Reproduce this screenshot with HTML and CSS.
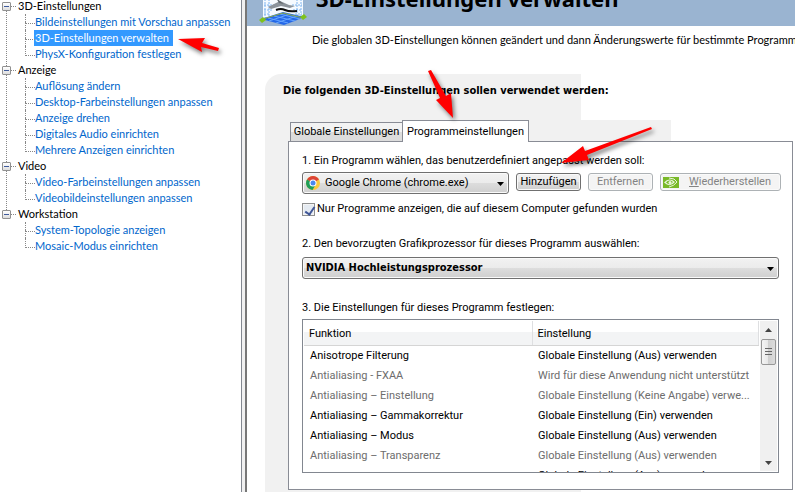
FILE: index.html
```html
<!DOCTYPE html>
<html lang="de">
<head>
    <meta charset="utf-8">
    <title>NVIDIA Systemsteuerung</title>
    <link rel="stylesheet" href="styles.css">
</head>
<body>

<nav class="sidebar">
    <ul class="tree">
        <li class="group">
            <button class="toggle" aria-label="3D-Einstellungen einklappen"></button><span class="group-name">3D-Einstellungen</span>
            <ul class="items">
                <li><a href="#">Bildeinstellungen mit Vorschau anpassen</a></li>
                <li><a href="#" class="selected">3D-Einstellungen verwalten</a></li>
                <li><a href="#">PhysX-Konfiguration festlegen</a></li>
            </ul>
        </li>
        <li class="group">
            <button class="toggle" aria-label="Anzeige einklappen"></button><span class="group-name">Anzeige</span>
            <ul class="items">
                <li><a href="#">Auflösung ändern</a></li>
                <li><a href="#">Desktop-Farbeinstellungen anpassen</a></li>
                <li><a href="#">Anzeige drehen</a></li>
                <li><a href="#">Digitales Audio einrichten</a></li>
                <li><a href="#">Mehrere Anzeigen einrichten</a></li>
            </ul>
        </li>
        <li class="group">
            <button class="toggle" aria-label="Video einklappen"></button><span class="group-name">Video</span>
            <ul class="items">
                <li><a href="#">Video-Farbeinstellungen anpassen</a></li>
                <li><a href="#">Videobildeinstellungen anpassen</a></li>
            </ul>
        </li>
        <li class="group">
            <button class="toggle" aria-label="Workstation einklappen"></button><span class="group-name">Workstation</span>
            <ul class="items">
                <li><a href="#">System-Topologie anzeigen</a></li>
                <li><a href="#">Mosaic-Modus einrichten</a></li>
            </ul>
        </li>
    </ul>
</nav>

<div class="splitter"></div>

<main class="content">
    <header class="banner">
        <svg class="banner-icon" width="48" height="48" viewBox="0 0 48 48">
            <path d="M4 0H44V40L24 46L4 41Z" fill="#f6faff"/>
            <path d="M6 0V40M10 0V38M38 0V38M42 0V40M5 27H15M33 27H43M5 32H14M34 32H43M5 36H11M36 36H43" stroke="#7fb4ee" stroke-dasharray="2 1" fill="none"/>
            <path d="M2 41L24 34L46 39L25 47Z" fill="#2468e8"/>
            <path d="M9 40L29 45M15 38L36 43M21 36L41 41M10 43L31 36M17 45L38 38" stroke="#65a5ff" stroke-width="1"/>
            <path d="M9 29L21 23L30 27L36 28L31 30L22 28L12 31Z" fill="#8c939b"/>
            <path d="M20 25L17 20L25 26Z" fill="#62696f"/>
            <path d="M17 32Q22 30 26 32T38 33" stroke="#111" stroke-width="2" fill="none"/>
            <path d="M4 41L24 35L44 40" stroke="#8fac45" fill="none"/>
            <path d="M0 42L4 39L7 42L3 45Z" fill="#7fc21c"/>
            <path d="M41 39L45 36L48 39L44 42Z" fill="#7fc21c"/>
        </svg>
        <h1>3D-Einstellungen verwalten</h1>
    </header>

    <p class="intro">Die globalen 3D-Einstellungen können geändert und dann Änderungswerte für bestimmte Programme erstellt werden.</p>

    <section class="settings">
        <h2>Die folgenden 3D-Einstellungen sollen verwendet werden:</h2>

        <div class="tabs">
            <button class="tab">Globale Einstellungen</button>
            <button class="tab active">Programmeinstellungen</button>
        </div>

        <div class="panel">
            <label class="step" for="program">1. Ein Programm wählen, das benutzerdefiniert angepasst werden soll:</label>
            <div class="program-row">
                <div class="dropdown program">
                    <select id="program"><option>Google Chrome (chrome.exe)</option></select>
                    <svg class="chrome" width="14" height="14" viewBox="0 0 14 14">
                        <circle cx="7" cy="7" r="7" fill="#fbc93d"/>
                        <path d="M7 7L1 3.5A7 7 0 0 1 13 3.5Z" fill="#dc4437"/>
                        <path d="M7 7L1 3.5A7 7 0 0 0 6.500 14L9.500 9Z" fill="#1f9d58"/>
                        <circle cx="7" cy="7" r="3.500" fill="#fff"/>
                        <circle cx="7" cy="7" r="2.500" fill="#4a87ee"/>
                    </svg>
                    <svg class="caret" width="7" height="4" viewBox="0 0 7 4"><path d="M0 0H7L3.500 4Z"/></svg>
                </div>
                <button class="btn">Hinzufügen</button>
                <button class="btn" disabled>Entfernen</button>
                <button class="btn restore" disabled>
                    <svg width="16" height="11" viewBox="0 0 16 11">
                        <path d="M0 0H16V11H0Z" fill="#79b928"/>
                        <path d="M1 5.500Q6 0 12 5Q7 11 1 5.500ZM3 5.500Q7 9 10 5Q6 2 3 5.500" fill="#e9f5dc" fill-rule="evenodd"/>
                        <circle cx="7" cy="5.500" r="1.500" fill="#e9f5dc"/>
                        <path d="M6 1Q12 1 14 5Q11 9 6 10" stroke="#e9f5dc" fill="none"/>
                    </svg>
                    <span><u>W</u>iederherstellen</span>
                </button>
            </div>

            <div class="check">
                <input type="checkbox" id="only-found" checked>
                <label for="only-found">Nur Programme anzeigen, die auf diesem Computer gefunden wurden</label>
            </div>

            <label class="step" for="gpu">2. Den bevorzugten Grafikprozessor für dieses Programm auswählen:</label>
            <div class="dropdown gpu">
                <select id="gpu"><option>NVIDIA Hochleistungsprozessor</option></select>
                <svg class="caret" width="7" height="4" viewBox="0 0 7 4"><path d="M0 0H7L3.500 4Z"/></svg>
            </div>

            <p class="step" id="features-label">3. Die Einstellungen für dieses Programm festlegen:</p>
            <div class="list">
                <table class="features" aria-labelledby="features-label">
                    <thead>
                        <tr><th>Funktion</th><th>Einstellung</th></tr>
                    </thead>
                    <tbody>
                        <tr><td>Anisotrope Filterung</td><td>Globale Einstellung (Aus) verwenden</td></tr>
                        <tr class="off"><td>Antialiasing - FXAA</td><td>Wird für diese Anwendung nicht unterstützt</td></tr>
                        <tr class="off"><td>Antialiasing – Einstellung</td><td>Globale Einstellung (Keine Angabe) verwe...</td></tr>
                        <tr><td>Antialiasing – Gammakorrektur</td><td>Globale Einstellung (Ein) verwenden</td></tr>
                        <tr><td>Antialiasing – Modus</td><td>Globale Einstellung (Aus) verwenden</td></tr>
                        <tr class="off"><td>Antialiasing – Transparenz</td><td>Globale Einstellung (Aus) verwenden</td></tr>
                        <tr><td></td><td>Globale Einstellung (Aus) verwenden</td></tr>
                    </tbody>
                </table>
                <div class="scrollbar">
                    <svg width="7" height="4" viewBox="0 0 7 4"><path d="M0 4H7L3.500 0Z"/></svg>
                    <div class="thumb"></div>
                    <svg class="down" width="7" height="4" viewBox="0 0 7 4"><path d="M0 0H7L3.500 4Z"/></svg>
                </div>
            </div>
        </div>
    </section>
</main>

<!-- hint arrows, drawn over the window -->
<svg class="arrows" width="795" height="492" viewBox="0 0 795 492">
    <path d="M178 39L205 38L202 43L219 48L218 51L201 47L202 52Z"/>
    <path d="M428 71L431 70L446 96L451 93L453 118L436 100L440 98Z"/>
    <path d="M561 163L583 146L585 151L651 127L652 129L587 155L589 160Z"/>
</svg>

</body>
</html>
```
FILE: styles.css
```css
* {
    box-sizing: border-box;
}
body {
    margin: 0;
    height: 100vh;
    display: flex;
    overflow: hidden;
    background: #fff;
    color: #000;
    font-family: Roboto, "Noto Sans", sans-serif;
    font-size: 11px;
    line-height: 16px;
}
button, select, input {
    font: inherit;
    color: inherit;
    margin: 0;
}
h1, h2, p, ul {
    margin: 0;
    padding: 0;
}

/* navigation tree */
.sidebar {
    width: 241px;
    flex: none;
    overflow: hidden;
    font-family: Lato, Roboto, sans-serif;
}
.tree, .items {
    list-style: none;
}
.tree {
    margin-top: -2px;
}
.group {
    position: relative;
    white-space: nowrap;
}
.group:not(:last-child)::before {
    content: "";
    position: absolute;
    left: 6px;
    top: 8px;
    bottom: -8px;
    border-left: 1px dotted #888;
}
.group::after {
    content: "";
    position: absolute;
    left: 11px;
    top: 8px;
    width: 5px;
    border-top: 1px dotted #888;
}
.toggle {
    position: absolute;
    left: 2px;
    top: 4px;
    width: 9px;
    height: 9px;
    padding: 0;
    border: 1px solid #919191;
    border-radius: 1px;
    background: linear-gradient(#3f5b9c, #3f5b9c) center / 5px 1px no-repeat, linear-gradient(#fff, #ddd);
    z-index: 1;
}
.group-name {
    display: block;
    padding-left: 18px;
}
.items {
    padding-left: 25px;
}
.items li {
    position: relative;
    height: 16px;
    padding-left: 9px;
}
.items li::before {
    content: "";
    position: absolute;
    left: 0;
    top: 0;
    width: 9px;
    height: 9px;
    border-left: 1px dotted #888;
    border-bottom: 1px dotted #888;
}
.items li:not(:last-child)::after {
    content: "";
    position: absolute;
    left: 0;
    top: 8px;
    bottom: 0;
    border-left: 1px dotted #888;
}
.items a {
    display: inline-block;
    height: 16px;
    line-height: 15px;
    padding: 0 1px;
    color: #0066cc;
    text-decoration: none;
}
.items a.selected {
    padding-right: 4px;
    background: #3399ff;
    color: #fff;
}

.splitter {
    width: 6px;
    flex: none;
    background: #f0f0f0;
    border-left: 1px solid #828790;
    border-right: 2px solid #777;
}

/* right side */
.content {
    flex: 1;
    min-width: 0;
}
.banner {
    height: 26px;
    display: flex;
    align-items: flex-end;
    gap: 9px;
    padding-left: 12px;
    background: #9ab4d1;
    overflow: hidden;
}
.banner-icon {
    flex: none;
}
.banner h1 {
    padding-bottom: 12px;
    font-family: "Noto Sans", sans-serif;
    font-size: 22px;
    line-height: 32px;
    white-space: nowrap;
}
.intro {
    padding: 6px 0 0 65px;
    height: 48px;
    font-family: Lato, Roboto, sans-serif;
    white-space: nowrap;
    overflow: hidden;
}
.settings {
    margin-left: 18px;
    padding: 9px 2px 3px 23px;
    min-height: 418px;
    border-top-left-radius: 16px;
    background:
        linear-gradient(#f1f1f1, #f1f1f1) 0 0 / 316px 100% no-repeat,
        linear-gradient(#f1f1f1, #f1f1f1) 0 46px / 406px 30px no-repeat;
}
.settings h2 {
    margin-left: -5px;
    font-family: "DejaVu Sans Condensed", "DejaVu Sans", sans-serif;
    font-size: 11px;
    line-height: 16px;
}
.tabs {
    display: flex;
    align-items: flex-end;
    margin-top: 21px;
    padding-left: 2px;
}
.tab {
    height: 19px;
    width: 112px;
    padding: 0;
    border: 1px solid #898c95;
    border-bottom: 0;
    border-right: 0;
    background: linear-gradient(#f3f3f3 50%, #dcdcdc 50%);
    white-space: nowrap;
}
.tab.active {
    position: relative;
    width: 127px;
    height: 22px;
    margin-bottom: -1px;
    border-right: 1px solid #898c95;
    background: #fff;
}
.panel {
    padding: 11px 13px 16px;
    border: 1px solid #898c95;
    background: #fff;
}
.step {
    display: block;
    white-space: nowrap;
}
.program-row {
    display: flex;
    align-items: flex-start;
    gap: 7px;
    margin-top: 3px;
}
.dropdown {
    position: relative;
}
.dropdown select {
    appearance: none;
    display: block;
    width: 100%;
    height: 22px;
    padding: 0 20px 0 3px;
    border: 1px solid #707070;
    border-radius: 3px;
    background: linear-gradient(#f2f2f2, #ebebeb 50%, #dddddd 50%, #cfcfcf);
    box-shadow: inset 0 0 0 1px #fafafa;
}
.caret {
    position: absolute;
    right: 5px;
    top: 10px;
    pointer-events: none;
}
.program {
    flex: none;
    width: 207px;
}
.dropdown.program select {
    padding-left: 22px;
}
.chrome {
    position: absolute;
    left: 4px;
    top: 4px;
}
.gpu {
    margin-top: 5px;
}
.gpu select {
    font-family: "DejaVu Sans Condensed", "DejaVu Sans", sans-serif;
    font-weight: bold;
}
.btn {
    flex: none;
    width: 65px;
    height: 18px;
    margin-top: 1px;
    padding: 0;
    line-height: 16px;
    border: 1px solid #707070;
    border-radius: 3px;
    background: linear-gradient(#f2f2f2, #ebebeb 50%, #dddddd 50%, #cfcfcf);
    box-shadow: inset 0 0 0 1px #fafafa;
    white-space: nowrap;
}
.btn:disabled {
    border-color: #adb2b5;
    background: #f4f4f4;
    color: #838383;
}
.btn.restore {
    display: flex;
    align-items: center;
    gap: 10px;
    width: 121px;
    padding-left: 2px;
}
.check {
    display: flex;
    align-items: center;
    gap: 2px;
    margin-top: 7px;
    white-space: nowrap;
}
.check input {
    appearance: none;
    width: 13px;
    height: 13px;
    border: 1px solid #8e8f8f;
    background: #e4eaf1;
    box-shadow: inset 0 0 0 1px #f4f4f4;
    position: relative;
}
.check input:checked::after {
    content: "";
    position: absolute;
    left: 4px;
    top: 1px;
    width: 4px;
    height: 8px;
    border: solid #3f5596;
    border-width: 0 2px 2px 0;
    transform: rotate(35deg);
}
.check + .step {
    margin-top: 19px;
}
.gpu + .step {
    margin-top: 21px;
}

/* feature list */
.list {
    display: flex;
    height: 154px;
    margin-top: 3px;
    padding: 1px;
    border: 1px solid #828790;
    overflow: hidden;
}
.features {
    width: 100%;
    align-self: flex-start;
    table-layout: fixed;
    border-collapse: collapse;
}
.features th, .features td {
    padding: 2px 0 0 6px;
    text-align: left;
    font-weight: normal;
    white-space: nowrap;
}
.features th {
    height: 24px;
    padding-left: 5px;
    border-right: 1px solid #dedfe1;
    border-bottom: 1px solid #d5d5d5;
    background: linear-gradient(#fff 45%, #f3f4f5 45%);
}
.features th:first-child {
    width: 228px;
}
.features td {
    height: 20px;
}
.off {
    color: #6d6d6d;
}
.scrollbar {
    display: flex;
    flex: none;
    flex-direction: column;
    align-items: center;
    width: 17px;
    margin-left: 1px;
    padding: 7px 1px 6px;
    background: #f0f0f0;
}
.scrollbar svg {
    flex: none;
    fill: #444;
}
.scrollbar .down {
    margin-top: auto;
}
.thumb {
    width: 15px;
    height: 26px;
    margin-top: 7px;
    border: 1px solid #979797;
    border-radius: 2px;
    background:
        repeating-linear-gradient(#666 0 1px, transparent 1px 3px) center / 7px 9px no-repeat,
        linear-gradient(90deg, #f5f5f5, #e6e6e6 50%, #d0d0d0 50%, #dcdcdc);
}

.arrows {
    position: absolute;
    left: 0;
    top: 0;
    pointer-events: none;
    fill: #f00;
    filter: drop-shadow(2px 3px 2px rgba(0, 0, 0, 0.5));
}
```
